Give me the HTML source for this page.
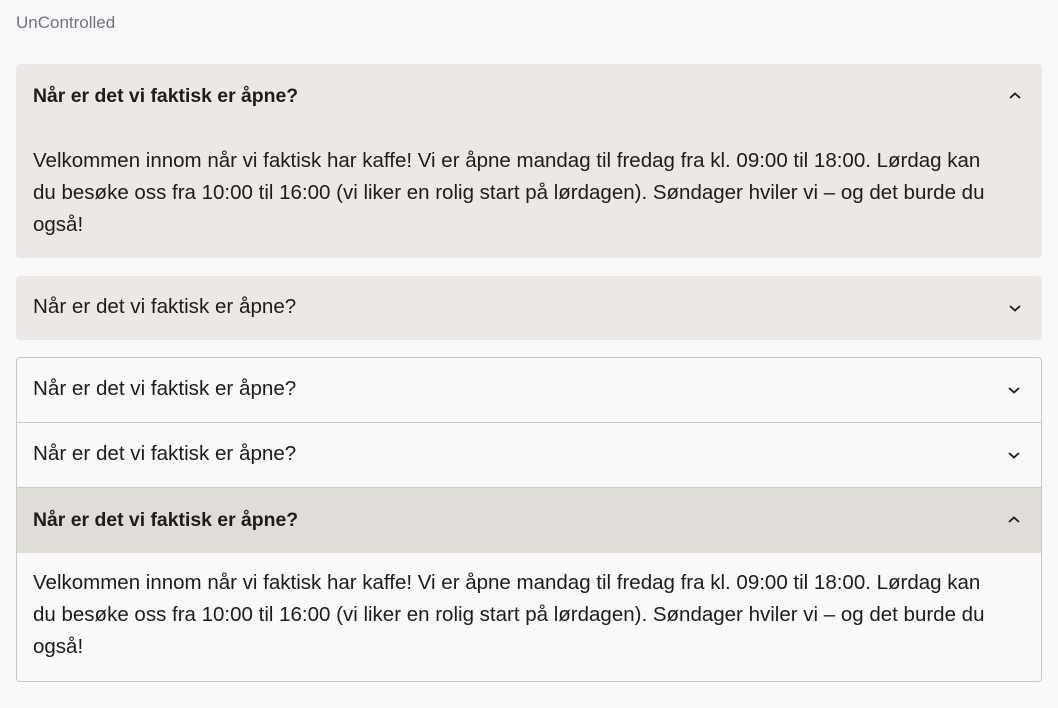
<!DOCTYPE html>
<html><head><meta charset="utf-8"><style>
body{margin:0;background:#f9f9f9;font-family:"Liberation Sans",Arial,sans-serif;color:#1c1c1c;width:1058px;height:708px;overflow:hidden;position:relative}
.lbl{position:absolute;left:16px;top:13px;font-size:17px;color:#6e7480}
.card{position:absolute;left:16px;width:1026px;background:#ece9e5;border-radius:4px}
.hd{height:65px;position:relative;font-size:20.6px;line-height:65px;padding-left:17px}
.b{font-weight:bold;font-size:19.4px}
.body{padding:16px 17px 0 17px;font-size:20.5px;line-height:32px;white-space:nowrap}
.ch{position:absolute;right:20px;top:27px;width:14px;height:10px}
.grp{position:absolute;left:16px;top:357px;width:1024px;height:323px;border:1px solid #c8c8c8;border-radius:4px;background:#f9f9f9;overflow:hidden}
.grp .hd,.grp .body{padding-left:16px}
.it{border-bottom:1px solid #c8c8c8}
</style></head><body>
<div class="lbl">UnControlled</div>
<div class="card" style="top:64px;height:194px">
<div class="hd b">Når er det vi faktisk er åpne?<svg class="ch" viewBox="0 0 14 10"><path d="M2 7L7 2.5L12 7" fill="none" stroke="#1c1c1c" stroke-width="1.8"/></svg></div>
<div class="body">Velkommen innom når vi faktisk har kaffe! Vi er åpne mandag til fredag fra kl. 09:00 til 18:00. Lørdag kan<br>du besøke oss fra 10:00 til 16:00 (vi liker en rolig start på lørdagen). Søndager hviler vi – og det burde du<br>også!</div>
</div>
<div class="card" style="top:276px;height:64px">
<div class="hd" style="height:64px;line-height:62px">Når er det vi faktisk er åpne?<svg class="ch" viewBox="0 0 14 10"><path d="M2 3L7 7.5L12 3" fill="none" stroke="#1c1c1c" stroke-width="1.8"/></svg></div>
</div>
<div class="grp">
<div class="hd it" style="height:64px;line-height:62px">Når er det vi faktisk er åpne?<svg class="ch" viewBox="0 0 14 10"><path d="M2 3L7 7.5L12 3" fill="none" stroke="#1c1c1c" stroke-width="1.8"/></svg></div>
<div class="hd it" style="height:64px;line-height:62px">Når er det vi faktisk er åpne?<svg class="ch" viewBox="0 0 14 10"><path d="M2 3L7 7.5L12 3" fill="none" stroke="#1c1c1c" stroke-width="1.8"/></svg></div>
<div class="hd b" style="background:#e0dcd7">Når er det vi faktisk er åpne?<svg class="ch" viewBox="0 0 14 10"><path d="M2 7L7 2.5L12 7" fill="none" stroke="#1c1c1c" stroke-width="1.8"/></svg></div>
<div class="body" style="padding-top:14px">Velkommen innom når vi faktisk har kaffe! Vi er åpne mandag til fredag fra kl. 09:00 til 18:00. Lørdag kan<br>du besøke oss fra 10:00 til 16:00 (vi liker en rolig start på lørdagen). Søndager hviler vi – og det burde du<br>også!</div>
</div>
</body></html>
